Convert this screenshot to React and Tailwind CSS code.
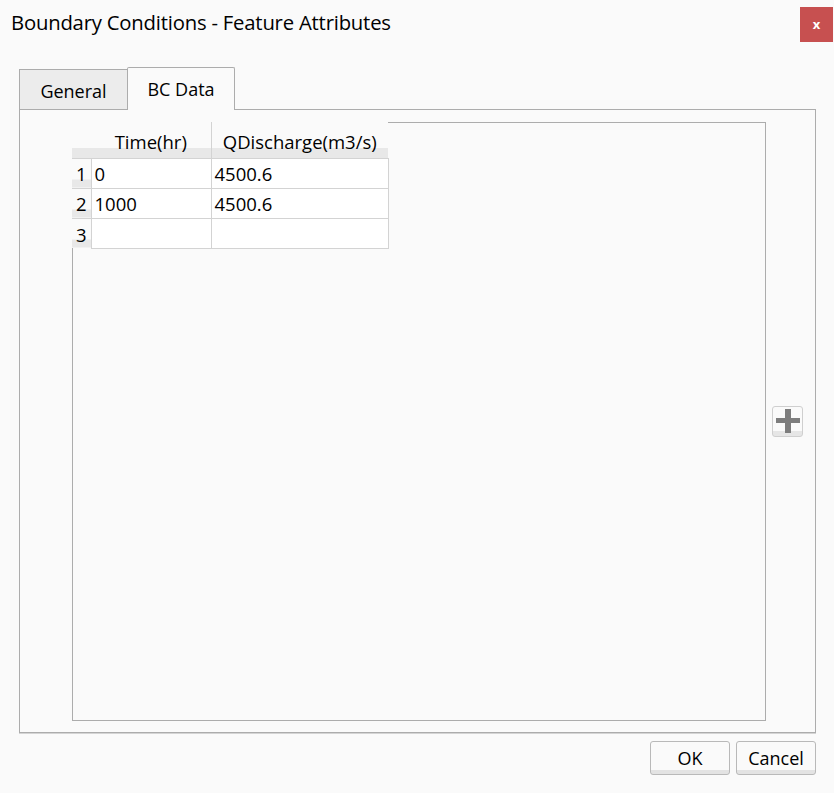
export default function App() {
  const rows = [
    ["1", "0", "4500.6"],
    ["2", "1000", "4500.6"],
    ["3", "", ""],
  ];

  const headBg = "bg-[linear-gradient(to_bottom,#fafafa_0,#fafafa_26px,#e8e8e8_26px)]";

  return (
    <div
      className="relative w-[834px] h-[793px] bg-[#fafafa] text-black overflow-hidden"
      style={{ fontFamily: '"Open Sans", "Noto Sans", sans-serif' }}
    >
      {/* title bar */}
      <div className="flex h-[42px] items-start justify-between">
        <div className="pl-[11px] pt-[9px] text-[20.3px] leading-[26px] tracking-[-0.2px]">
          Boundary Conditions - Feature Attributes
        </div>
        <button className="mt-[7px] mr-[1px] flex h-[35px] w-[33px] items-center justify-center bg-[#c75050] text-[13px] font-bold leading-none text-white">
          x
        </button>
      </div>

      {/* tabs */}
      <div className="ml-[19px] mt-[25px] flex items-end">
        <div className="flex h-[40px] w-[109px] items-center justify-center border border-b-0 border-[#acacac] bg-[#ececec] pt-[3px] text-[18px]">
          General
        </div>
        <div className="relative z-10 -ml-[1px] -mb-[1px] flex h-[43px] w-[108px] items-center justify-center rounded-t-[2px] border border-b-0 border-[#acacac] bg-[#fafafa] text-[18px]">
          BC Data
        </div>
      </div>

      {/* tab panel */}
      <div className="ml-[19px] flex h-[624px] w-[797px] items-center border border-[#acacac] shadow-[0_1px_0_#d4d4d4]">
        <div className="ml-[52px] mt-[12px] mb-[10px] flex h-[599px] w-[694px] flex-col items-start self-start border border-[#acacac] bg-[#fafafa]">
          <table className="-ml-[1px] -mt-[1px] w-[316px] table-fixed border-collapse text-[18.5px] leading-none">
            <colgroup>
              <col className="w-[19px]" />
              <col className="w-[120px]" />
              <col className="w-[177px]" />
            </colgroup>
            <thead>
              <tr className="h-[36px]">
                <th className={`${headBg} p-0`}></th>
                <th className={`${headBg} p-0 pt-[4px] font-normal`}>Time(hr)</th>
                <th className={`${headBg} border-l border-[#d3d3d3] p-0 pt-[4px] font-normal`}>
                  QDischarge(m3/s)
                </th>
              </tr>
            </thead>
            <tbody>
              {rows.map((r) => (
                <tr key={r[0]} className="h-[30px]">
                  <td className="border-t border-[#d3d3d3] bg-[linear-gradient(to_bottom,#fafafa_0,#fafafa_21px,#e8e8e8_21px)] p-0 pl-[4px] pt-[3px] align-middle">
                    {r[0]}
                  </td>
                  <td className="border border-[#d3d3d3] bg-white p-0 pl-[3px] pt-[3px] align-middle">{r[1]}</td>
                  <td className="border border-[#d3d3d3] bg-white p-0 pl-[3px] pt-[3px] align-middle">{r[2]}</td>
                </tr>
              ))}
            </tbody>
          </table>
        </div>

        <button className="ml-[6px] flex h-[31px] w-[31px] items-center justify-center rounded-[3px] border border-[#cfcfcf] bg-[linear-gradient(to_bottom,#fafafa_0,#fafafa_24px,#e6e6e6_24px)]">
          <svg width="24" height="24" viewBox="0 0 24 24">
            <rect x="9" y="0" width="6" height="24" fill="#7d7d7d" />
            <rect x="0" y="9" width="24" height="5" fill="#7d7d7d" />
          </svg>
        </button>
      </div>

      {/* footer buttons */}
      <div className="mt-[8px] mr-[18px] flex justify-end gap-[6px]">
        <button className="flex h-[34px] w-[80px] items-center justify-center rounded-[3px] border border-[#b9b9b9] bg-[linear-gradient(to_bottom,#fafafa_0,#fafafa_28px,#e3e3e3_28px)] text-[18px]">
          OK
        </button>
        <button className="flex h-[34px] w-[80px] items-center justify-center rounded-[3px] border border-[#b9b9b9] bg-[linear-gradient(to_bottom,#fafafa_0,#fafafa_28px,#e3e3e3_28px)] text-[18px]">
          Cancel
        </button>
      </div>
    </div>
  );
}
